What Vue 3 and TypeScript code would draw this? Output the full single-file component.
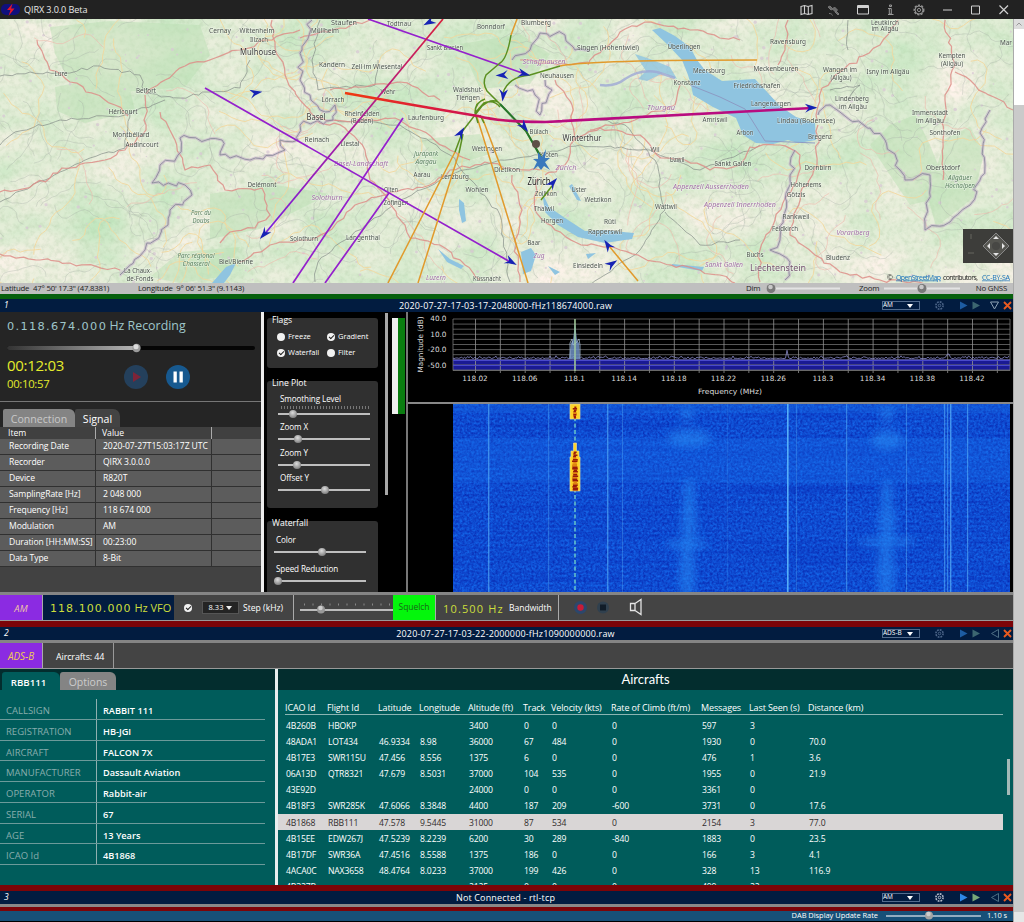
<script setup lang="ts">
interface Label { x: number; y: number; t: string; w: number; k?: string }
interface Panel { id: number; title: string; mode: string; tone: string; dim: boolean; open: boolean }

function makeRandom(seed: number): () => number {
  let s = seed
  return () => {
    s = (s * 16807) % 2147483647
    return s / 2147483647
  }
}

/* Minor road network: wandering polylines across the map */
function wander(count: number, seed: number, steps: number, stride: number): string[] {
  const rnd = makeRandom(seed)
  const out: string[] = []
  for (let i = 0; i < count; i++) {
    let x = rnd() * 1013
    let y = rnd() * 264
    let a = rnd() * Math.PI * 2
    let d = `M${x.toFixed(1)} ${y.toFixed(1)}`
    for (let j = 0; j < steps; j++) {
      a += (rnd() - 0.5) * 1.5
      x += Math.cos(a) * stride
      y += Math.sin(a) * stride
      d += `L${x.toFixed(1)} ${y.toFixed(1)}`
    }
    out.push(d)
  }
  return out
}
const greyRoads = wander(210, 771, 14, 5)
const yellowRoads = wander(80, 4242, 16, 7)
const pinkRoads = wander(34, 919, 13, 6)

/* Jitters a polyline so borders and railways look hand surveyed */
function rough(points: number[], seed: number, amp: number): string {
  const rnd = makeRandom(seed)
  let d = `M${points[0]} ${points[1] - 19}`
  for (let i = 2; i < points.length; i += 2) {
    const x0 = points[i - 2], y0 = points[i - 1], x1 = points[i], y1 = points[i + 1]
    const n = Math.max(1, Math.round(Math.hypot(x1 - x0, y1 - y0) / 6))
    for (let j = 1; j <= n; j++) {
      const f = j / n
      const e = j === n ? 0 : amp
      d += `L${(x0 + (x1 - x0) * f + (rnd() - 0.5) * e).toFixed(1)} ${(y0 + (y1 - y0) * f + (rnd() - 0.5) * e - 19).toFixed(1)}`
    }
  }
  return d
}
const mainRoads = [
  [37, 40, 50, 70, 70, 82, 115, 105, 128, 116], [0, 192, 18, 190, 50, 178, 62, 168, 105, 160, 125, 150, 146, 130, 145, 95],
  [146, 94, 165, 80, 185, 66, 215, 58, 240, 50, 265, 40, 300, 30], [272, 20, 275, 42, 285, 75, 300, 100, 316, 118],
  [160, 112, 175, 140, 185, 170, 210, 165, 225, 190, 262, 188, 270, 215, 255, 228, 230, 232, 220, 243], [0, 254, 40, 260, 70, 263, 120, 270],
  [316, 120, 345, 128, 365, 150, 370, 180, 385, 195, 405, 225, 410, 238, 440, 245, 465, 265, 480, 280],
  [240, 262, 270, 245, 310, 240, 335, 225, 355, 205, 385, 195, 430, 185, 450, 170, 485, 162, 510, 168, 540, 170],
  [316, 118, 350, 122, 395, 118, 420, 130, 450, 150, 470, 160], [330, 90, 365, 87, 400, 82, 440, 100],
  [555, 80, 572, 105, 574, 140, 565, 165, 545, 175], [574, 140, 600, 128, 640, 135, 657, 155, 685, 160, 710, 170, 740, 165, 750, 147, 780, 145, 800, 155, 798, 175, 775, 220, 760, 250, 760, 282],
  [818, 125, 817, 165, 800, 195, 790, 235, 815, 255, 840, 272, 880, 280, 925, 284], [817, 120, 822, 88, 845, 68, 880, 45, 898, 20],
  [945, 20, 955, 65, 945, 100, 943, 140, 943, 180], [955, 72, 975, 85, 1013, 110], [538, 178, 535, 210, 555, 230, 575, 242, 620, 250, 660, 262, 700, 270, 720, 275, 735, 283],
  [588, 65, 620, 32, 645, 22, 690, 30, 740, 40], [588, 62, 570, 65, 520, 60], [788, 20, 785, 50, 778, 65], [590, 130, 635, 120, 675, 105, 680, 85],
  [512, 175, 522, 210, 515, 240, 520, 282], [370, 20, 340, 28, 300, 38],
].map((p, i) => rough(p, 31 + i, 4))
const borders = [
  [312, 20, 302, 50, 300, 80, 310, 95, 325, 112, 335, 105, 333, 120, 300, 125, 298, 140, 280, 140, 285, 150, 250, 160, 230, 158, 220, 155, 222, 140, 180, 138, 178, 155, 160, 165, 152, 183, 185, 185, 192, 195, 170, 210, 168, 225, 145, 250, 120, 275],
  [512, 60, 530, 50, 540, 33, 565, 35, 575, 50, 590, 50], [818, 115, 830, 105, 850, 120, 870, 128, 885, 140, 900, 170, 905, 180, 930, 175, 925, 230, 950, 222, 970, 205, 985, 165, 982, 128, 990, 110],
  [545, 80, 552, 90, 540, 115, 535, 95, 515, 85], [795, 150, 790, 180, 780, 240, 770, 250, 790, 262, 785, 280],
].map((p, i) => rough(p, 131 + i, 6))
const rails = [
  [0, 76, 30, 72, 65, 73, 100, 66, 140, 75, 145, 93, 180, 98, 210, 92, 240, 88, 250, 60], [0, 145, 15, 132, 60, 120, 125, 115, 165, 100],
  [0, 202, 45, 180, 60, 172, 90, 158, 125, 148, 130, 110], [320, 20, 312, 60, 318, 90, 375, 85, 378, 60],
  [335, 120, 400, 125, 450, 155, 500, 215, 510, 282], [315, 282, 318, 262, 345, 240, 400, 200, 450, 175, 500, 160, 540, 155, 580, 145, 650, 150, 700, 170, 760, 145],
  [665, 210, 655, 160, 625, 125, 600, 120], [665, 210, 640, 250, 590, 285], [665, 212, 700, 245, 740, 240], [848, 100, 860, 85, 830, 90], [848, 50, 848, 20],
].map((p, i) => rough(p, 231 + i, 3))

const labels: Label[] = [
  { x: 220, y: 33, t: 'Cernay', w: 22 }, { x: 257, y: 33, t: 'Wittenheim', w: 35 }, { x: 259, y: 42, t: 'Illzach', w: 18 },
  { x: 258, y: 55, t: 'Mulhouse', w: 36, k: 'city' }, { x: 344, y: 25, t: 'Staufen', w: 26 }, { x: 325, y: 33, t: 'Müllheim', w: 28 },
  { x: 399, y: 26, t: 'Todtnau', w: 24 }, { x: 491, y: 29, t: 'Bonndorf', w: 28 }, { x: 445, y: 50, t: 'Sankt Blasien', w: 36 },
  { x: 332, y: 67, t: 'Kandern', w: 26 }, { x: 377, y: 69, t: 'Zell im Wiesental', w: 51 }, { x: 61, y: 76, t: 'Lure', w: 13 },
  { x: 146, y: 93, t: 'Belfort', w: 20 }, { x: 123, y: 114, t: 'Héricourt', w: 29 }, { x: 131, y: 137, t: 'Montbéliard', w: 37 },
  { x: 142, y: 147, t: 'Audincourt', w: 33 }, { x: 388, y: 94, t: 'Wehr', w: 15 }, { x: 333, y: 102, t: 'Lörrach', w: 23 },
  { x: 316, y: 120, t: 'Basel', w: 19, k: 'city' }, { x: 362, y: 116, t: 'Rheinfelden', w: 35 }, { x: 362, y: 123, t: '(Baden)', w: 22 },
  { x: 426, y: 120, t: 'Laufenburg', w: 36 }, { x: 468, y: 92, t: 'Waldshut-', w: 30 }, { x: 468, y: 100, t: 'Tiengen', w: 24 },
  { x: 317, y: 142, t: 'Reinach', w: 25 }, { x: 350, y: 146, t: 'Liestal', w: 19 }, { x: 361, y: 166, t: 'Basel-Landschaft', w: 54, k: 'region' },
  { x: 426, y: 156, t: 'Jurapark', w: 24, k: 'park' }, { x: 426, y: 164, t: 'Aargau', w: 21, k: 'park' }, { x: 422, y: 177, t: 'Aarau', w: 17 },
  { x: 455, y: 179, t: 'Lenzburg', w: 28 }, { x: 487, y: 151, t: 'Wettingen', w: 30 }, { x: 507, y: 172, t: 'Dietikon', w: 26 },
  { x: 262, y: 187, t: 'Delémont', w: 29 }, { x: 327, y: 200, t: 'Solothurn', w: 31, k: 'region' }, { x: 391, y: 192, t: 'Olten', w: 14 },
  { x: 396, y: 205, t: 'Zofingen', w: 25 }, { x: 477, y: 192, t: 'Wohlen', w: 23 }, { x: 201, y: 215, t: 'Parc du', w: 20, k: 'park' },
  { x: 201, y: 223, t: 'Doubs', w: 17, k: 'park' }, { x: 304, y: 241, t: 'Solothurn', w: 28 }, { x: 363, y: 240, t: 'Langenthal', w: 34 },
  { x: 196, y: 258, t: 'Parc régional', w: 37, k: 'park' }, { x: 196, y: 266, t: 'Chasseral', w: 27, k: 'park' }, { x: 236, y: 264, t: 'Biel/Bienne', w: 34 },
  { x: 138, y: 273, t: 'La Chaux-', w: 28 }, { x: 140, y: 281, t: 'de-Fonds', w: 27 }, { x: 436, y: 280, t: 'Luzern', w: 20, k: 'region' },
  { x: 487, y: 281, t: 'Küssnacht', w: 28 }, { x: 536, y: 25, t: 'Blumberg', w: 30 }, { x: 608, y: 50, t: 'Singen (Hohentwiel)', w: 62 },
  { x: 684, y: 49, t: 'Überlingen', w: 33 }, { x: 544, y: 64, t: 'Schaffhausen', w: 43, k: 'region' }, { x: 557, y: 78, t: 'Neuhausen', w: 34 },
  { x: 709, y: 73, t: 'Meersburg', w: 32 }, { x: 687, y: 85, t: 'Konstanz', w: 27 }, { x: 757, y: 88, t: 'Friedrichshafen', w: 47 },
  { x: 776, y: 71, t: 'Meckenbeuren', w: 45 }, { x: 788, y: 44, t: 'Ravensburg', w: 36 }, { x: 885, y: 25, t: 'Leutkirch', w: 28 },
  { x: 885, y: 31, t: 'im Allgäu', w: 27 }, { x: 840, y: 72, t: 'Wangen im', w: 34 }, { x: 841, y: 80, t: '(Allgäu)', w: 21 },
  { x: 888, y: 74, t: 'Isny im Allgäu', w: 43 }, { x: 952, y: 58, t: 'Kempten', w: 27 }, { x: 952, y: 66, t: '(Allgäu)', w: 22 },
  { x: 1006, y: 45, t: 'Mar', w: 12 }, { x: 852, y: 101, t: 'Lindenberg', w: 34 }, { x: 853, y: 109, t: 'im Allgäu', w: 28 },
  { x: 771, y: 106, t: 'Langenargen', w: 40 }, { x: 661, y: 110, t: 'Thurgau', w: 28, k: 'region' }, { x: 715, y: 122, t: 'Amriswil', w: 25 },
  { x: 806, y: 123, t: 'Lindau (Bodensee)', w: 58 }, { x: 930, y: 115, t: 'Immenstadt', w: 36 }, { x: 930, y: 123, t: 'im Allgäu', w: 28 },
  { x: 539, y: 134, t: 'Bülach', w: 19 }, { x: 582, y: 141, t: 'Winterthur', w: 39, k: 'city' }, { x: 745, y: 135, t: 'Arbon', w: 17 },
  { x: 820, y: 139, t: 'Bregenz', w: 24 }, { x: 945, y: 135, t: 'Sonthofen', w: 31 }, { x: 549, y: 157, t: 'Kloten', w: 18 },
  { x: 655, y: 152, t: 'Wil', w: 9 }, { x: 677, y: 162, t: 'Uzwil', w: 15 }, { x: 733, y: 166, t: 'Sankt Gallen', w: 37 },
  { x: 539, y: 185, t: 'Zürich', w: 23, k: 'big' }, { x: 566, y: 170, t: 'Zürich', w: 21, k: 'region' }, { x: 818, y: 170, t: 'Dornbirn', w: 27 },
  { x: 943, y: 170, t: 'Oberstdorf', w: 34 }, { x: 960, y: 180, t: 'Allgäuer', w: 24, k: 'park' }, { x: 960, y: 188, t: 'Hochalpen', w: 30, k: 'park' },
  { x: 546, y: 196, t: 'Zollikon', w: 22 }, { x: 579, y: 192, t: 'Uster', w: 15 }, { x: 598, y: 202, t: 'Wetzikon', w: 27 },
  { x: 711, y: 189, t: 'Appenzell Ausserrhoden', w: 76, k: 'region' }, { x: 740, y: 207, t: 'Appenzell Innerrhoden', w: 72, k: 'region' },
  { x: 806, y: 187, t: 'Hohenems', w: 31 }, { x: 796, y: 197, t: 'Götzis', w: 19 }, { x: 666, y: 209, t: 'Wattwil', w: 22 },
  { x: 544, y: 211, t: 'Thalwil', w: 20 }, { x: 552, y: 223, t: 'Horgen', w: 22 }, { x: 610, y: 224, t: 'Rüti', w: 12 },
  { x: 605, y: 234, t: 'Rapperswil', w: 34 }, { x: 796, y: 219, t: 'Rankweil', w: 27 }, { x: 785, y: 231, t: 'Feldkirch', w: 26 },
  { x: 853, y: 235, t: 'Vorarlberg', w: 33, k: 'region' }, { x: 534, y: 245, t: 'Baar', w: 13 }, { x: 539, y: 258, t: 'Zug', w: 11, k: 'region' },
  { x: 588, y: 268, t: 'Einsiedeln', w: 30 }, { x: 755, y: 257, t: 'Buchs', w: 17 }, { x: 724, y: 267, t: 'Sankt Gallen', w: 38, k: 'region' },
  { x: 778, y: 271, t: 'Liechtenstein', w: 56, k: 'country' }, { x: 838, y: 260, t: 'Bludenz', w: 24 },
]
const planes = [
  [256, 93, -12], [429, 22, 150], [502, 75, 175], [503, 95, 95], [524, 74, 14], [811, 108, -2], [264, 234, 130], [511, 262, 28],
  [461, 133, -60], [524, 127, 50], [553, 183, -50], [608, 245, -125], [612, 264, -35],
]
const villages = (() => {
  const rnd = makeRandom(5511)
  return Array.from({ length: 380 }, () => ({ x: rnd() * 1013, y: rnd() * 264, r: 0.5 + rnd() * 1.3 }))
})()

const panels: Panel[] = [
  { id: 1, title: '2020-07-27-17-03-17-2048000-fHz118674000.raw', mode: 'AM', tone: 'green', dim: true, open: true },
  { id: 2, title: '2020-07-27-17-03-22-2000000-fHz1090000000.raw', mode: 'ADS-B', tone: 'red', dim: true, open: false },
  { id: 3, title: 'Not Connected - rtl-tcp', mode: 'AM', tone: 'red', dim: false, open: false },
]

const signal = [
  ['Recording Date', '2020-07-27T15:03:17Z UTC'], ['Recorder', 'QIRX 3.0.0.0'], ['Device', 'R820T'], ['SamplingRate [Hz]', '2 048 000'],
  ['Frequency [Hz]', '118 674 000'], ['Modulation', 'AM'], ['Duration [HH:MM:SS]', '00:23:00'], ['Data Type', '8-Bit'],
]
const lineSliders = [
  { name: 'Zoom X', at: 20 }, { name: 'Zoom Y', at: 19 }, { name: 'Offset Y', at: 47 },
]

/* Spectrum geometry, origin at the plot panel's top left corner */
const gridX = Array.from({ length: 22 }, (_, i) => 67.5 + i * 24.85)
const gridY = Array.from({ length: 11 }, (_, i) => 7 + i * 5.1)
const ticks = ['118.02', '118.06', '118.1', '118.14', '118.18', '118.22', '118.26', '118.3', '118.34', '118.38', '118.42']
const yTicks = [['40.0', 6], ['10.0', 21.5], ['-20.0', 37], ['-50.0', 52.5]] as const
const noiseLine = (() => {
  const rnd = makeRandom(88)
  let d = 'M45 46'
  for (let x = 46; x < 602; x += 1.5) {
    const spike = Math.abs(x - 379) < 1 ? 8 : Math.abs(x - 540) < 1.5 ? 4 : 0
    d += `L${x} ${(46.6 - rnd() * rnd() * 3 - spike).toFixed(1)}`
  }
  return d
})()

/* Waterfall carriers: x offset inside the waterfall, width, opacity */
const carriers = [
  [35, 1.4, 0.6], [95, 1.2, 0.35], [154, 1.4, 0.6], [169, 1, 0.35], [334, 1.6, 0.95], [343, 1, 0.3], [274, 1, 0.15], [393, 1.2, 0.5],
  [453, 1, 0.45], [491, 1.2, 0.55], [494, 1.2, 0.5], [497, 1.4, 0.7], [514, 1.2, 0.6],
]
const plumes = [
  [234, 10, 6, 7], [236, 34, 22, 9], [236, 90, 6, 16], [236, 118, 8, 20], [234, 140, 22, 5], [234, 170, 8, 30],
  [434, 10, 7, 7], [434, 36, 16, 10], [434, 90, 6, 14], [434, 118, 9, 18], [434, 138, 30, 5], [433, 168, 9, 30],
]
const burst = (() => {
  const rnd = makeRandom(303)
  const out: { x: number; y: number; w: number; c: string }[] = []
  for (let y = 2.5; y < 86; y += 1.5) {
    if (y > 13 && y < 47) continue
    const w = (y < 54 ? 2 : 3.2) + rnd() * 2.4
    out.push({ x: 122 - w / 2 + (rnd() - 0.5), y, w, c: rnd() > 0.3 ? '#9a1a08' : '#e08410' })
  }
  return out
})()

const details = [
  ['CALLSIGN', 'RABBIT 111'], ['REGISTRATION', 'HB-JGI'], ['AIRCRAFT', 'FALCON 7X'], ['MANUFACTURER', 'Dassault Aviation'],
  ['OPERATOR', 'Rabbit-air'], ['SERIAL', '67'], ['AGE', '13 Years'], ['ICAO Id', '4B1868'],
]
const columns = ['ICAO Id', 'Flight Id', 'Latitude', 'Longitude', 'Altitude (ft)', 'Track', 'Velocity (kts)', 'Rate of Climb (ft/m)', 'Messages', 'Last Seen (s)', 'Distance (km)']
const aircraft = [
  ['4B260B', 'HBOKP', '', '', '3400', '0', '0', '0', '597', '3', ''],
  ['48ADA1', 'LOT434', '46.9334', '8.98', '36000', '67', '484', '0', '1930', '0', '70.0'],
  ['4B17E3', 'SWR115U', '47.456', '8.556', '1375', '6', '0', '0', '476', '1', '3.6'],
  ['06A13D', 'QTR8321', '47.679', '8.5031', '37000', '104', '535', '0', '1955', '0', '21.9'],
  ['43E92D', '', '', '', '24000', '0', '0', '0', '3361', '0', ''],
  ['4B18F3', 'SWR285K', '47.6066', '8.3848', '4400', '187', '209', '-600', '3731', '0', '17.6'],
  ['4B1868', 'RBB111', '47.578', '9.5445', '31000', '87', '534', '0', '2154', '3', '77.0'],
  ['4B15EE', 'EDW267J', '47.5239', '8.2239', '6200', '30', '289', '-840', '1883', '0', '23.5'],
  ['4B17DF', 'SWR36A', '47.4516', '8.5588', '1375', '186', '0', '0', '166', '3', '4.1'],
  ['4ACA0C', 'NAX3658', '48.4764', '8.0233', '37000', '199', '426', '0', '328', '13', '116.9'],
  ['4B327B', '', '', '', '2125', '0', '0', '0', '499', '22', ''],
]
</script>

<template>
  <div class="window">
    <header class="titlebar">
      <svg class="logo" width="20" height="19" viewBox="0 0 20 19">
        <rect x="1" y="4" width="19" height="11" rx="5" fill="#10107c" />
        <path d="M12.5 3.5 7 10h3.5L8.5 16l6-7.5h-3.4z" fill="#e4142c" />
      </svg>
      <span class="app-name">QIRX 3.0.0 Beta</span>
      <svg class="title-icons" width="228" height="19" viewBox="796 0 228 19" fill="none" stroke="#d0d0d0" stroke-width="1">
        <path d="M801 6.5l3.5-1 3.5 1 4-1v8l-4 1-3.500-1-3.500 1zM804.500 5.500v8M808.300 6.500v8" stroke-width="1.100" />
        <g stroke="#777" fill="#6a6a6a"><path d="M830 6l3 3-2 1-3-3zM836 11l3 3-1 1-3-3z" /><path d="M832.500 9l2-2 3 3-2 2z" /><path d="M829 13.500c2 0 3 .500 3.500 2" fill="none" /></g>
        <path d="M857.500 5.500h11v8.500h-11zM857.500 7.500h11M857.500 6.500h11" />
        <path d="M889.300 8.500h2v5.500h-2zM888 8.500h2M888 14.500h5.500M889.500 5h2v1.500h-2z" stroke="#999" />
        <g stroke="#8f8f8f"><circle cx="919" cy="10" r="4.700" stroke-dasharray="2.200 1.200" stroke-width="1.600" /><circle cx="919" cy="10" r="4" /><circle cx="919" cy="10" r="1.600" /></g>
        <path d="M943 10h9" /><path d="M971.500 6h8v8h-8z" /><path d="M999.500 5.500l8.500 8.500M1008 5.500l-8.500 8.500" stroke-width="1.200" />
      </svg>
    </header>

    <div class="content">
      <main class="main">
        <section class="map">
          <svg class="map-canvas" width="1013" height="264" viewBox="0 0 1013 264">
            <defs>
              <filter id="terrain" x="0" y="0" width="100%" height="100%" color-interpolation-filters="sRGB">
                <feTurbulence type="fractalNoise" baseFrequency="0.014 0.018" numOctaves="5" seed="8" />
                <feColorMatrix type="matrix" values="0.3 0 0 0 0.735  0.06 0 0 0 0.9  0.22 0 0 0 0.73  0 0 0 0 1" />
              </filter>
              <filter id="relief" x="0" y="0" width="100%" height="100%" color-interpolation-filters="sRGB">
                <feTurbulence type="fractalNoise" baseFrequency="0.2" numOctaves="3" seed="21" />
                <feColorMatrix type="matrix" values="0 0 0 0 0.62  0 0 0 0 0.74  0 0 0 0 0.58  1.200 0 0 0 -0.5" />
              </filter>
              <linearGradient id="climb" gradientUnits="userSpaceOnUse" x1="345" y1="74" x2="540" y2="103">
                <stop offset="0" stop-color="#f03a10" /><stop offset=".5" stop-color="#d81840" /><stop offset="1" stop-color="#b80c80" />
              </linearGradient>
              <linearGradient id="descent" x1="1" y1="0" x2="0" y2="1">
                <stop offset="0" stop-color="#d8203c" /><stop offset=".5" stop-color="#a81c9c" /><stop offset="1" stop-color="#7a20e0" />
              </linearGradient>
            </defs>
            <rect width="1013" height="264" filter="url(#terrain)" />
            <rect width="1013" height="264" filter="url(#relief)" opacity=".5" />
            <g fill="#bbe0b4" opacity=".5">
              <path d="M50 8l60-6 90 4 10 30-25 32-60 5-55-10-15-28zM55 68l40-8 35 10 5 22-50 12-28-12zM890 106l25-10 15 30 20 50-40 10-20-30-20-30zM945 120l25-12 14 25-10 45-38 30-8-30z" />
              <path d="M460 25l60-10 30 20-20 30-50 5zM210 175l60-10 60 10-70 35-50 10zM150 258l30-25 60-5-20 30-40 6zM420 120l60-5 10 20-50 15z" />
            </g>
            <g fill="#d8c9d4" opacity=".75"><circle v-for="(v, i) in villages" :key="i" :cx="v.x" :cy="v.y" :r="v.r" /></g>
            <g fill="none" stroke-linejoin="round">
              <path v-for="(d, i) in greyRoads" :key="'g' + i" :d="d" stroke="#a9b0a8" stroke-width=".6" opacity=".6" />
              <path v-for="(d, i) in yellowRoads" :key="'y' + i" :d="d" stroke="#f2d79c" stroke-width="1" opacity=".85" />
              <path v-for="(d, i) in pinkRoads" :key="'p' + i" :d="d" stroke="#eebcae" stroke-width=".8" opacity=".8" />
            </g>
            <g fill="#8fc4e0">
              <path d="M652 11l8-2 15 8 15 11 7 13 8 10 17 11 33-2 13 14 12 13 16 11 19 6 1 17-18 3-10-3-15 4-17-1-13-8-7-17-23-11-20-12-2-10-3-10-6-15-14-15z" />
              <path d="M635 35l15 5 20 8 7 12-14-6-16 8-9-2 8-8z" opacity=".8" />
              <path d="M542 173l7 15 16 11 20 13 20-1 29 3-2 6-27 4-27-6-20-12-13-13zM572 165l9 17-4-1-8-14zM521 233l10-4 5 7-5 16-8 3zM459 180l5 4 2 18-4 2-3-13zM438 230l12 10 14 7-3 3-14-7zM672 245l32 3-2 4-30-5zM212 264l14-16 10-4-6 12-6 8zM586 235l10-1-8 6zM548 247l12 6-5 3z" />
            </g>
            <path d="M600 66q15 2 25-6 15-10 32-7l18 6" stroke="#9da8d4" stroke-width="2.500" fill="none" opacity=".8" />
            <path d="M690 66l30 12 25 12 20 32 50 2" stroke="#8c9bc4" stroke-width="1" fill="none" />
            <g fill="none" stroke-linejoin="round">
              <path v-for="(d, i) in rails" :key="'r' + i" :d="d" stroke="#87908a" stroke-width=".9" opacity=".8" />
              <path v-for="(d, i) in mainRoads" :key="'m' + i" :d="d" stroke="#dd8e88" stroke-width="1.250" opacity=".85" />
              <g v-for="(d, i) in borders" :key="'b' + i"><path :d="d" stroke="#c3a9c8" stroke-width="3" opacity=".55" /><path :d="d" stroke="#7e8392" stroke-width="1" opacity=".75" /></g>
            </g>
            <g class="labels">
              <text v-for="(l, i) in labels" :key="'t' + i" :class="l.k" :x="l.x" :y="l.y - 19" :textLength="l.w" lengthAdjust="spacingAndGlyphs">{{ l.t }}</text>
            </g>
            <g fill="none" stroke-width="1.500">
              <path d="M205 69 512 244M403 99 293 264M389 174 325 264M368 0 528 56" stroke="#9420cc" stroke-width="1.700" />
              <path d="M443 0 263 217" stroke="url(#descent)" stroke-width="1.700" />
              <path d="M388 264 455 133M418 264 459 134M477 98 528 264M482 98 502 151M517 0 511 16M560 47Q590 41 757 41M609 227 638 262" stroke="#e19a2c" />
              <path d="M455 133 461 117M459 134 463 115M478 104 475 94Q475 83 485 80M484 104 480 96M511 16Q507 40 500 44L486 56Q482 64 487 72L499 84 526 112 542 139M461 114 482 87Q491 79 498 83M475 94 484 84Q494 80 500 88M503 74Q508 58 530 56L560 47M541 181 552 167" stroke="#5b8f20" />
              <path d="M500 85 526 112 543 142" stroke="#27762c" stroke-width="2" />
              <path d="M345 74 Q435 90 478 97 Q500 103 545 103 L812 89" stroke="url(#climb)" stroke-width="2.700" />
            </g>
            <circle cx="536" cy="125" r="4" fill="#5e5147" />
            <path d="M538 133l4 5 4-8-1 9 5 0-5 4 5 8-6-4-3 4-3-4-5 4 4-8-4-3 5 0z" fill="#3a78bc" />
            <path v-for="(p, i) in planes" :key="'a' + i" d="M6.500 0-6-4.500-2.200 0-6 4.500-1.500 2.200z" fill="#1622b4" :transform="`translate(${p[0]} ${p[1] - 19}) rotate(${p[2]})`" />
            <g class="credit"><text x="887" y="260.500">©</text><text class="link" x="896" y="260.500" textLength="45">OpenStreetMap</text><text x="943" y="260.500" textLength="35">contributors,</text><text class="link" x="982" y="260.500" textLength="28">CC-BY-SA</text></g>
          </svg>
          <div class="pan-pad">
            <svg width="50" height="34" viewBox="0 0 50 34">
              <path d="M33 4 46 17 33 30 20 17z" fill="#555550" stroke="#888" stroke-width="1" />
              <path d="M33 7l3 3h-6zM33 27l3-3h-6zM24 17l3-3v6zM42 17l-3-3v6z" fill="#e6e6e6" /><circle cx="33" cy="17" r="4" fill="#474744" />
              <path d="M5 24h6M8 5v5" stroke="#66665f" />
            </svg>
          </div>
        </section>
        <div class="map-status">
          <span class="lat">Latitude&nbsp; 47° 50' 17.3" (47.8381)</span>
          <span class="lon">Longitude&nbsp; 9° 06' 51.3" (9.1143)</span>
          <span class="dim">Dim</span>
          <svg width="78" height="10" viewBox="0 0 78 10"><path d="M3 4.500h74" stroke="#e3e3e3" stroke-width="2" /><circle cx="8" cy="4.500" r="4.500" fill="#787878" /><circle cx="7.500" cy="3" r="2.300" fill="#c8c8c8" /></svg>
          <span class="zoomlabel">Zoom</span>
          <svg width="78" height="10" viewBox="0 0 78 10"><path d="M1 4.500h76" stroke="#e3e3e3" stroke-width="2" /><circle cx="39" cy="4.500" r="4.500" fill="#787878" /><circle cx="38.500" cy="3" r="2.300" fill="#c8c8c8" /></svg>
          <span class="gnss">No GNSS</span>
        </div>

        <section v-for="p in panels" :key="p.id" class="receiver">
          <div class="band" :class="p.tone"></div>
          <div class="panelbar">
            <i>{{ p.id }}</i>
            <span class="file">{{ p.title }}</span>
            <div class="tools">
              <div class="select"><span>{{ p.mode }}</span><b></b></div>
              <svg width="90" height="13" viewBox="923 0 90 13">
                <g fill="none" :stroke="p.dim ? '#4c6588' : '#b4bccb'"><circle cx="939.500" cy="6.500" r="3.600" stroke-dasharray="1.800 1" stroke-width="1.600" /><circle cx="939.500" cy="6.500" r="1.300" /></g>
                <path d="M960 2.500l7.500 4-7.500 4z" :fill="p.dim ? '#1d5ca2' : '#2e88e8'" /><path d="M972.500 2.500l7.500 4-7.500 4z" :fill="p.dim ? '#3c6670' : '#78a878'" />
                <path :d="p.open ? 'M990.500 3h8l-4 7z' : 'M998.500 2.500v8l-7-4z'" fill="none" :stroke="p.open ? '#8fa4b6' : '#4e6e84'" />
                <path d="M1004 3l7 7M1011 3l-7 7" stroke="#e85a20" stroke-width="1.900" />
              </svg>
            </div>
          </div>

          <template v-if="p.id === 1">
            <div class="radio">
              <div class="recording">
                <div class="player">
                  <div class="freq"><span class="digits">0.118.674.000</span> Hz Recording</div>
                  <svg class="progress" width="261" height="12" viewBox="0 0 261 12">
                    <defs><linearGradient id="played"><stop offset="0" stop-color="#333" /><stop offset="1" stop-color="#b5b5b5" /></linearGradient></defs>
                    <rect x="7" y="4" width="248" height="4" rx="2" fill="#050505" /><rect x="7" y="4" width="130" height="4" rx="2" fill="url(#played)" />
                    <circle cx="136.500" cy="6" r="4.200" fill="#9b9b9b" /><circle cx="136" cy="4.800" r="2.500" fill="#ddd" />
                  </svg>
                  <div class="transport">
                    <div class="times"><b>00:12:03</b><b>00:10:57</b></div>
                    <svg width="68" height="28" viewBox="0 0 68 28">
                      <circle cx="12" cy="14" r="12" fill="#24405c" /><path d="M9 9v10l8-5z" fill="#7e2438" />
                      <circle cx="54" cy="14" r="12" fill="#17598f" /><path d="M49.500 8.500h3.300v11h-3.300zM55.500 8.500h3.300v11h-3.300z" fill="#fff" />
                    </svg>
                  </div>
                </div>
                <div class="tabs"><span class="tab idle">Connection</span><span class="tab active">Signal</span></div>
                <div class="signal">
                  <div class="sig-head"><span>Item</span><span>Value</span><span></span></div>
                  <div v-for="r in signal" :key="r[0]" class="sig-row"><span>{{ r[0] }}</span><span>{{ r[1] }}</span><span></span></div>
                </div>
              </div>

              <div class="settings">
                <div class="group flags">
                  <h4>Flags</h4>
                  <div class="checks">
                    <label><em class="dot"></em>Freeze</label><label><em class="dot on"></em>Gradient</label>
                    <label><em class="dot on"></em>Waterfall</label><label><em class="dot"></em>Filter</label>
                  </div>
                </div>
                <div class="group lineplot">
                  <h4>Line Plot</h4>
                  <div class="field smooth"><span>Smoothing Level</span><div class="notches"></div><div class="slider"><u :style="{ marginLeft: '11px' }"></u></div></div>
                  <div v-for="s in lineSliders" :key="s.name" class="field"><span>{{ s.name }}</span><div class="slider"><u :style="{ marginLeft: s.at - 4 + 'px' }"></u></div></div>
                </div>
                <div class="group falls">
                  <h4>Waterfall</h4>
                  <div class="field"><span>Color</span><div class="slider"><u :style="{ marginLeft: '44px' }"></u></div></div>
                  <div class="field"><span>Speed Reduction</span><div class="slider"><u :style="{ marginLeft: '0px' }"></u></div></div>
                </div>
              </div>
              <div class="scroll-strip"><div></div></div>
              <div class="meter"><div></div></div>

              <div class="plots">
                <svg width="605" height="90" viewBox="0 0 605 90" class="spectrum">
                  <rect x="45" y="47" width="557" height="11" fill="#1a1a94" />
                  <g stroke="#6e6e6e" stroke-width=".8"><path v-for="y in gridY" :key="y" :d="`M45 ${y}H602`" /><path v-for="x in gridX" :key="x" :d="`M${x} 7V61`" stroke="#929292" /></g>
                  <path d="M45 7V58.500H602V7" fill="none" stroke="#777" stroke-width=".8" />
                  <path d="M45 48.500H602M45 53.500H602" stroke="#4949ca" />
                  <path :d="noiseLine" fill="none" stroke="#8c8ccc" stroke-width=".8" />
                  <path d="M161 47l2-16 2-3 2-17 2 17 2 3 1 16z" fill="#6f8fc4" opacity=".85" /><path d="M162 46v-15l2-4 1 6 3-2 3-4 1 6v13" fill="none" stroke="#a3bad2" stroke-width=".8" />
                  <path d="M167 7V59" stroke="#a4d29a" stroke-width="1.300" />
                  <g class="axis">
                    <text v-for="t in yTicks" :key="t[0]" x="38.500" :y="t[1] + 3" text-anchor="end">{{ t[0] }}</text>
                    <text v-for="(t, i) in ticks" :key="t" :x="67 + i * 49.700" y="69" text-anchor="middle">{{ t }}</text>
                    <text x="322" y="82" text-anchor="middle" textLength="64" lengthAdjust="spacingAndGlyphs">Frequency (MHz)</text>
                    <text transform="translate(15 60.500) rotate(-90)" textLength="56" lengthAdjust="spacingAndGlyphs">Magnitude (dB)</text>
                  </g>
                </svg>
                <div class="plot-divider"></div>
                <svg width="557" height="188" viewBox="0 0 557 188" class="waterfall">
                  <defs>
                    <filter id="grain" x="0" y="0" width="100%" height="100%" color-interpolation-filters="sRGB"><feTurbulence type="fractalNoise" baseFrequency="0.42" numOctaves="2" seed="5" /><feColorMatrix type="matrix" values="0.06 0 0 0 0.03  0.34 0 0 0 0.13  0.32 0 0 0 0.66  0 0 0 0 1" /></filter>
                    <filter id="streaks" x="0" y="0" width="100%" height="100%" color-interpolation-filters="sRGB"><feTurbulence type="fractalNoise" baseFrequency="0.004 0.3" numOctaves="2" seed="3" /><feColorMatrix type="matrix" values="0 0 0 0 0.02  0 0 0 0 0.14  0 0 0 0 0.7  2 0 0 0 -0.9" /></filter>
                    <filter id="soft" x="-40%" y="-40%" width="180%" height="180%"><feGaussianBlur stdDeviation="4" /></filter>
                  </defs>
                  <rect width="557" height="188" filter="url(#grain)" />
                  <rect width="557" height="188" filter="url(#streaks)" opacity=".4" />
                  <rect y="34" width="557" height="45" fill="#1a78ee" opacity=".25" /><rect y="0" width="557" height="9" fill="#1a70e8" opacity=".3" />
                  <g filter="url(#soft)"><ellipse v-for="(e, i) in plumes" :key="i" :cx="e[0]" :cy="e[1]" :rx="e[2]" :ry="e[3]" fill="#2a92f8" opacity=".5" /></g>
                  <rect v-for="(c, i) in carriers" :key="i" :x="c[0]" y="0" :width="c[1]" height="188" fill="#5cb4f8" :opacity="c[2]" />
                  <path d="M122 0V188" stroke="#68c6cc" stroke-width="1.500" stroke-dasharray="4 2.500" />
                  <path d="M117 0h10v15h-10zM120.500 39h3v8h2.500v6h1v34h-10V53h1v-6h2.500z" fill="#ffd428" stroke="#e2d898" stroke-width=".7" />
                  <rect v-for="(b, i) in burst" :key="'b' + i" :x="b.x" :y="b.y" :width="b.w" height="1.600" :fill="b.c" />
                </svg>
              </div>
            </div>
            <div class="toolbar">
              <div class="mode">AM</div>
              <div class="vfo"><span>118.100.000</span> Hz VFO</div>
              <em class="dot on step-check"></em>
              <div class="step">8.33<b></b></div>
              <span class="step-text">Step (kHz)</span>
              <div class="squelch-range"><svg width="99" height="24" viewBox="0 0 99 24"><path d="M6 15h93" stroke="#bcbcbc" stroke-width="2" /><path d="M10 9.500h89" stroke="#888" stroke-width="2" stroke-dasharray="1 7.500" /><circle cx="27" cy="14.500" r="4" fill="#999" /><circle cx="26.500" cy="13" r="2.200" fill="#ccc" /></svg></div>
              <div class="squelch">Squelch</div>
              <div class="bandwidth"><span>10.500 Hz</span><small>Bandwidth</small></div>
              <svg width="100" height="24" viewBox="560 0 100 24"><circle cx="581.500" cy="11.500" r="6.500" fill="#2c476c" /><circle cx="581.500" cy="11.500" r="3.200" fill="#c71c38" /><circle cx="604" cy="11.500" r="6" fill="#30404e" /><path d="M601 8.500h6v6h-6z" fill="#101c28" /><path d="M631.500 7.500h4.500v7h-4.500zM636 7.500l6-4v15l-6-4" fill="none" stroke="#e4e4e4" stroke-width="1.300" /></svg>
            </div>
          </template>

          <template v-if="p.id === 2">
            <div class="toolbar adsb"><div class="mode">ADS-B</div><div class="count">Aircrafts: 44</div></div>
            <div class="traffic">
              <div class="plane-info">
                <div class="info-tabs"><span class="info-tab active">RBB111</span><span class="info-tab idle">Options</span></div>
                <div class="info-list"><div v-for="d in details" :key="d[0]" class="info-row"><span>{{ d[0] }}</span><strong>{{ d[1] }}</strong></div></div>
              </div>
              <div class="table-side">
                <h3>Aircrafts</h3>
                <div class="table-body">
                  <div class="air-table">
                    <div class="air-row head"><span v-for="c in columns" :key="c">{{ c }}</span></div>
                    <div v-for="r in aircraft" :key="r[0]" class="air-row" :class="{ chosen: r[0] === '4B1868' }"><span v-for="(c, j) in r" :key="j">{{ c }}</span></div>
                  </div>
                  <div class="air-scroll"></div>
                </div>
              </div>
            </div>
          </template>
        </section>
        <div class="end-line"></div>
        <div class="band last"></div>
        <footer class="footer">
          <span>DAB Display Update Rate</span>
          <svg width="98" height="10" viewBox="0 0 98 10"><path d="M2 5h95" stroke="#bccbd8" stroke-width="1.500" /><circle cx="45" cy="4.500" r="4" fill="#a3a3a3" /><circle cx="44.500" cy="3" r="2.200" fill="#ccc" /></svg>
          <span class="rate">1.10 s</span>
        </footer>
      </main>
      <aside class="page-scroll"><svg width="10" height="10" viewBox="0 0 10 10"><path d="M2.500 6.500 5 4l2.500 2.500" fill="none" stroke="#999" /></svg><div></div><i></i></aside>
    </div>
  </div>
</template>

<style>
html, body { margin: 0; background: #000; overflow: hidden; }
</style>

<style scoped>
* { box-sizing: border-box; }
.window { width: 1024px; height: 922px; overflow: hidden; display: flex; flex-direction: column; font-family: "Open Sans", "Noto Sans", sans-serif; font-size: 9px; line-height: 1; color: #fff; background: #000; }
.window svg { display: block; flex: none; }
.titlebar { height: 19px; background: #222; display: flex; align-items: center; }
.app-name { margin-left: 4px; font-size: 9.1px; letter-spacing: -.1px; padding-top: 1px; flex: 1; white-space: nowrap; color: #e8e8e8; }
.content { display: flex; height: 903px; }
.main { width: 1013px; height: 903px; overflow: hidden; }
.page-scroll { width: 11px; background: #cacaca; border-left: 1px solid #aaa; display: flex; flex-direction: column; }
.page-scroll svg { background: #ddd; }
.page-scroll div { height: 76px; background: #fff; }
.page-scroll i { margin-top: auto; height: 10px; background: #e6e6e6; }

.map { height: 264px; position: relative; overflow: hidden; }
.labels text { font-family: "Noto Sans", sans-serif; font-size: 7px; fill: #4a524b; text-anchor: middle; paint-order: stroke; stroke: rgba(255, 255, 255, .5); stroke-width: 1px; }
.labels text.city { font-size: 9px; fill: #3c3c3c; }
.labels text.big { font-size: 10px; fill: #222; }
.labels text.country { font-size: 9px; fill: #75566f; }
.labels text.region { fill: #a170a5; font-style: italic; font-size: 7.500px; }
.labels text.park { fill: #577f5c; font-style: italic; }
.credit text { font-size: 7px; fill: #222; }
.credit .link { fill: #1670b8; text-decoration: underline; }
.pan-pad { position: absolute; right: 0; top: 210px; width: 50px; height: 34px; background: #3d3d3a; }
.map-status { height: 11px; background: #bfbfbf; color: #1e1e1e; display: flex; align-items: center; font-size: 7.800px; letter-spacing: -.2px; white-space: nowrap; }
.lat { padding-left: 1px; width: 138px; }
.lon { width: 608px; }
.dim { width: 17px; }
.zoomlabel { margin-left: 18px; width: 24px; }
.gnss { margin-left: auto; padding-right: 6px; }

.band { height: 6px; background: #7c0408; }
.band.green { height: 5px; background: #07600e; }
.panelbar { height: 13px; background: #021c40; display: grid; grid-template-columns: 1fr auto 1fr; align-items: center; }
.panelbar i { padding-left: 4px; font-size: 8.500px; }
.file { font-size: 9px; letter-spacing: .15px; margin-right: 2px; white-space: nowrap; }
.tools { display: flex; justify-content: flex-end; align-items: center; }
.select { width: 38px; height: 9px; margin-right: 3px; border: 1px solid #536c8d; display: flex; align-items: center; font-size: 6.500px; }
.select b { width: 0; height: 0; border: 3px solid transparent; border-top: 4px solid #fff; border-bottom: 0; margin-left: auto; margin-right: 6px; }

.radio { height: 280px; display: flex; background: #000; }
.recording { width: 264px; background: #424242; border-right: 3px solid #eee; display: flex; flex-direction: column; }
.player { height: 90px; background: #252525; border-bottom: 1px solid #777; }
.freq { height: 29px; padding: 8px 0 0 7px; color: #9fc6ca; font-size: 12.400px; white-space: nowrap; }
.digits { font-family: "DejaVu Sans", sans-serif; font-size: 11.300px; letter-spacing: 1.350px; margin-right: -1px; }
.progress { margin-top: 1px; }
.transport { display: flex; padding-left: 7px; height: 44px; }
.times { width: 117px; padding-top: 1px; color: #e4ec2c; display: flex; flex-direction: column; }
.times b { font-weight: 400; font-size: 15px; line-height: 20px; letter-spacing: -.3px; }
.times b + b { font-size: 11.300px; line-height: 18px; }
.transport svg { margin-top: 9px; }
.tabs { height: 25px; background: #252525; display: flex; align-items: flex-end; padding-left: 3px; font-size: 10.600px; }
.tab { height: 18px; padding-top: 5px; text-align: center; }
.tab.idle { width: 72px; background: #848484; color: #c9c9c9; border-radius: 2px 6px 0 0; }
.tab.active { width: 45px; background: #434343; border-radius: 2px 7px 0 0; }
.signal { font-size: 8.600px; white-space: nowrap; }
.sig-head, .sig-row { display: grid; grid-template-columns: 95px 116px 1fr; }
.sig-head { height: 12px; background: #404040; }
.sig-head span { padding: 2px 0 0 6px; border-left: 1px solid #aaa; }
.sig-head span:first-child { border: 0; padding-left: 8px; }
.sig-row { height: 16px; background: #5c5c5c; border-bottom: 1px solid #303030; }
.sig-row span { padding: 3px 0 0 7px; border-left: 1px solid #303030; letter-spacing: -.1px; }
.sig-row span:first-child { border: 0; padding-left: 9px; }

.settings { width: 121px; padding: 6px 7px 0 3px; overflow: hidden; font-size: 8.100px; }
.group { background: #303030; border-radius: 3px; width: 111px; padding-left: 13px; white-space: nowrap; }
.group h4 { margin: 0 0 0 -8px; font-size: 8.600px; font-weight: 400; line-height: 8px; position: relative; top: -2px; }
.flags { height: 50px; }
.checks { display: grid; grid-template-columns: 50px 1fr; row-gap: 7px; margin: 6px 0 0 -3px; font-size: 7.500px; letter-spacing: -.05px; }
.checks label { display: flex; align-items: center; gap: 3px; height: 9px; }
.dot { width: 8px; height: 8px; border-radius: 50%; background: #f2f2f2; flex: none; }
.dot.on::after { content: ""; display: block; width: 4px; height: 2px; margin: 2px 0 0 2px; border-left: 1px solid #222; border-bottom: 1px solid #222; transform: rotate(-45deg); }
.lineplot { height: 127px; margin-top: 13px; padding-left: 11px; }
.falls { height: 90px; margin-top: 13px; padding-left: 7px; }
.lineplot h4 { margin-left: -6px; }
.falls h4 { margin-left: -2px; }
.field { height: 25.700px; }
.field > span { display: block; padding-left: 2px; line-height: 10px; letter-spacing: -.1px; }
.field.smooth { height: 28px; margin-top: 5px; }
.slider { width: 92px; height: 10px; margin-top: 2px; padding-top: 1px; background: linear-gradient(#bebebe, #bebebe) 0 4px / 92px 2px no-repeat; }
.slider u { display: block; width: 8px; height: 8px; border-radius: 50%; background: radial-gradient(circle at 45% 35%, #ddd, #888 70%); }
.notches { width: 88px; height: 3px; margin: 2px 0 0 3px; background: repeating-linear-gradient(90deg, #777 0 1px, transparent 1px 3px); }
.notches + .slider { margin-top: 0; }
.falls .field:first-of-type { margin-top: 6px; }
.falls .field { height: 28.500px; }
.scroll-strip { width: 4px; padding-top: 1px; }
.scroll-strip div { width: 3px; height: 182px; background: #a7a7a7; }
.meter { width: 19px; padding: 6px 0 0 3px; border-right: 2px solid #777; }
.meter div { width: 13px; height: 96px; background: linear-gradient(90deg, #eee 0 6px, #0a7d10 6px); }
.plots { width: 605px; }
.axis text { fill: #ddd; font-family: "DejaVu Sans", sans-serif; font-size: 7.300px; }
.plot-divider { height: 2px; background: #888; }
.waterfall { margin-left: 45px; }

.toolbar { height: 29px; background: #444; border-top: 3px solid #858585; border-bottom: 1px solid #999; display: flex; align-items: center; white-space: nowrap; }
.mode { width: 43px; height: 25px; background: #8b2be2; color: #f0c4a8; font-style: italic; font-size: 9.500px; border-right: 1px solid #aaa; display: flex; align-items: center; justify-content: center; padding-top: 2px; }
.vfo { width: 131px; height: 25px; background: #021c40; color: #ccdf3c; padding: 7px 0 0 7px; font-size: 11px; }
.vfo span { font-family: "DejaVu Sans", sans-serif; letter-spacing: 1.050px; }
.step-check { margin-left: 10px; }
.step { margin-left: 10px; width: 37px; height: 13px; background: #242424; border: 1px solid #555; display: flex; align-items: center; justify-content: center; gap: 3px; font-size: 7.500px; }
.step b { width: 0; height: 0; border: 3px solid transparent; border-top: 4px solid #eee; border-bottom: 0; }
.step-text { margin-left: 4px; width: 50px; padding-top: 2px; font-size: 8.600px; }
.squelch-range { border-left: 1px solid #aaa; width: 100px; height: 25px; }
.squelch { width: 42px; height: 25px; background: #04f60c; color: #17651a; font-size: 8.400px; display: flex; align-items: center; justify-content: center; }
.bandwidth { width: 124px; height: 25px; border-left: 1px solid #aaa; border-right: 1px solid #aaa; padding: 1px 0 0 7px; display: flex; align-items: center; font-size: 11px; color: #ccdf3c; }
.bandwidth span { letter-spacing: 1.150px; width: 66px; }
.bandwidth small { font-size: 8.500px; color: #fff; }
.adsb .mode { color: #f0cf50; font-size: 9.900px; }
.count { width: 71px; height: 25px; border-right: 1px solid #999; display: flex; align-items: center; padding: 2px 0 0 13px; font-size: 9px; letter-spacing: -.15px; }

.traffic { height: 216px; display: flex; background: #005c5b; }
.plane-info { width: 278px; border-right: 3px solid #e8eeee; }
.info-tabs { height: 21px; background: #032d2e; display: flex; align-items: flex-end; padding-left: 2px; }
.info-tab { height: 18px; display: flex; align-items: center; justify-content: center; padding-top: 3px; }
.info-tab.active { width: 58px; background: #005c5b; font-size: 9.700px; font-weight: 600; border-radius: 3px 6px 0 0; padding-right: 5px; }
.info-tab.idle { width: 56px; background: #848484; color: #ccc; font-size: 10.500px; border-radius: 3px 6px 0 0; }
.info-list { padding-top: 9px; width: 265px; }
.info-row { height: 20.750px; border-bottom: 1px solid #6c9a9a; display: grid; grid-template-columns: 96px 1fr; align-items: stretch; white-space: nowrap; }
.info-row span { color: #87adad; padding: 7px 0 0 6px; font-size: 9.500px; }
.info-row strong { border-left: 1px solid #8fb0b0; padding: 7px 0 0 6px; font-size: 9.200px; font-weight: 600; }
.table-side { flex: 1; overflow: hidden; }
.table-side h3 { margin: 0; height: 21px; background: #032d2e; font-family: Lato, sans-serif; font-weight: 400; font-size: 13px; line-height: 21px; text-align: center; }
.table-body { display: flex; height: 195px; overflow: hidden; }
.air-table { width: 725px; padding-top: 10px; }
.air-row { display: grid; grid-template-columns: 42px 51px 41px 49px 55px 28px 60px 90px 48px 59px 1fr; padding: 1px 0 0 8px; height: 16.050px; align-items: center; font-size: 8.600px; white-space: nowrap; letter-spacing: -.15px; }
.air-row.head { height: 15px; margin: 0 0 3px 7px; padding: 0; border-bottom: 1px solid #8bb5b3; font-size: 9px; letter-spacing: -.12px; }
.air-row.chosen { background: #d9d6d6; color: #302c2c; }
.air-scroll { margin: 69px 0 0 4px; width: 3px; height: 36px; background: #a4bab8; }
.end-line { height: 3px; background: #888; }
.band.last { height: 4px; }
.footer { height: 10px; background: #175078; display: flex; align-items: center; justify-content: flex-end; font-size: 7.500px; letter-spacing: -.05px; white-space: nowrap; }
.footer svg { margin-left: 6px; }
.rate { width: 31px; padding-left: 5px; }
</style>
